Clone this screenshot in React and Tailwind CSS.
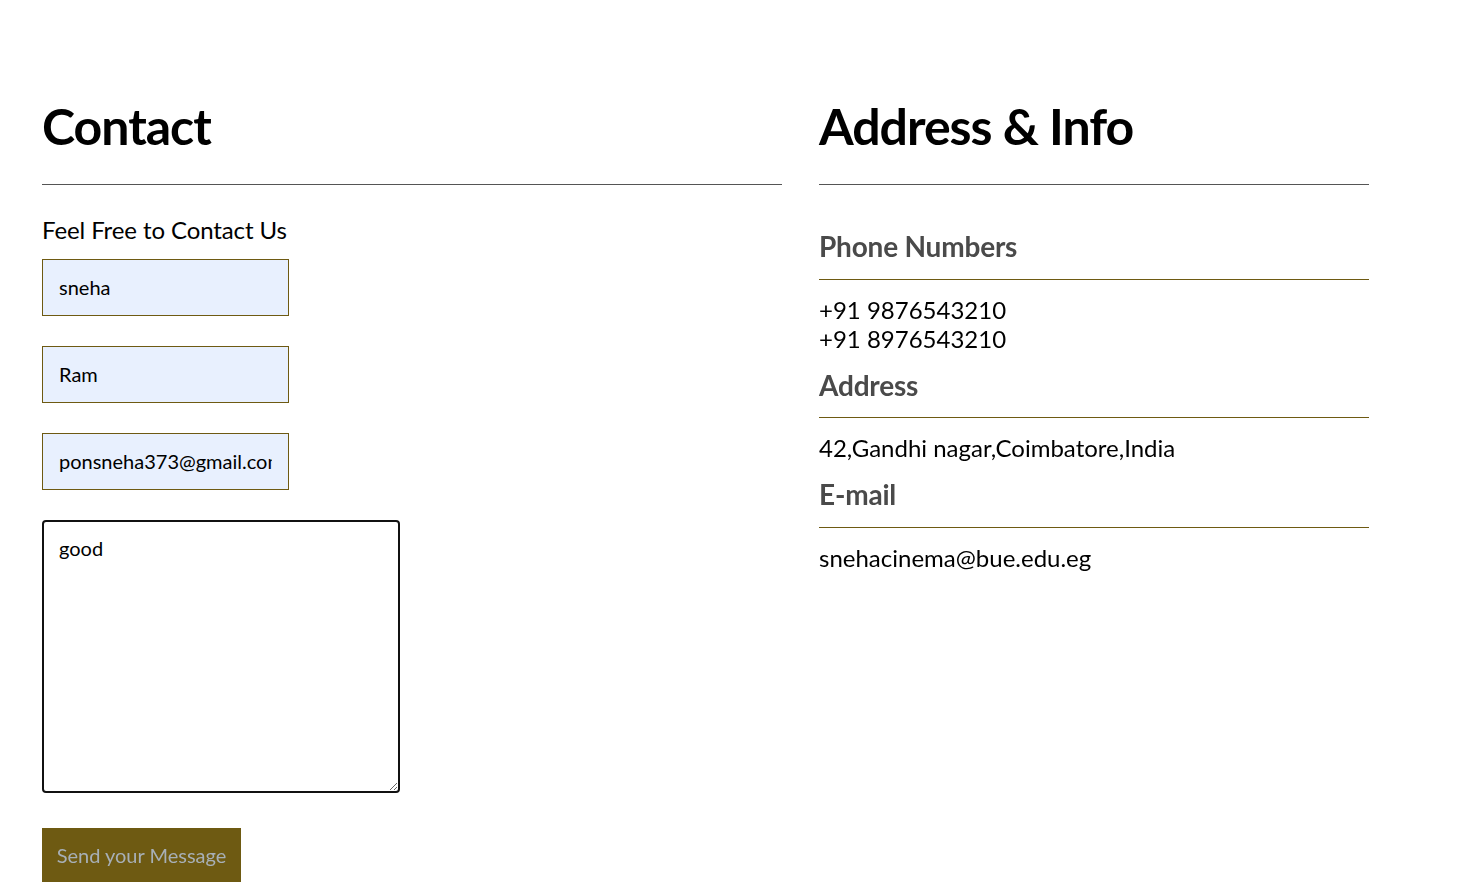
import React from 'react';

const InfoBlock = ({ title, children }) => (
  <div className="mt-[16px] first:mt-[15px]">
    <h3 className="text-[28px] font-bold leading-[1.2] tracking-[-0.2px] text-[#4a4a4a]">{title}</h3>
    <hr className="mt-[15px] border-0 border-t border-[#6e5a12]" />
    <div className="mt-[15px] text-[24px] leading-[29px] text-black">{children}</div>
  </div>
);

export default function App() {
  return (
    <div className="min-h-screen bg-white font-['Lato','Liberation_Sans',sans-serif] text-black">
      <div className="flex gap-[37px] pl-[42px] pt-[96px]">
        {/* Contact form */}
        <div className="w-[740px]">
          <h1 className="text-[50px] font-bold leading-[1.2] tracking-[-1px]">Contact</h1>
          <hr className="mt-[28px] border-0 border-t border-[#555]" />
          <p className="mt-[31px] text-[24px] leading-[1.2] tracking-[-0.1px]">Feel Free to Contact Us</p>
          <form className="mt-[14px] flex flex-col gap-[30px]" onSubmit={(e) => e.preventDefault()}>
            <input
              type="text"
              defaultValue="sneha"
              className="h-[57px] w-[247px] border border-[#6e5a12] bg-[#e8f0fe] px-4 text-[20px] text-black outline-none"
            />
            <input
              type="text"
              defaultValue="Ram"
              className="h-[57px] w-[247px] border border-[#6e5a12] bg-[#e8f0fe] px-4 text-[20px] text-black outline-none"
            />
            <input
              type="email"
              defaultValue="ponsneha373@gmail.com"
              className="h-[57px] w-[247px] border border-[#6e5a12] bg-[#e8f0fe] px-4 text-[20px] text-black outline-none"
            />
            <textarea
              defaultValue="good"
              autoFocus
              className="h-[273px] w-[358px] rounded-[4px] border-2 border-[#111] px-[15px] pt-[14px] text-[20px] leading-[1.2] text-black caret-black outline-none"
            />
            <button
              type="submit"
              className="mt-[5px] h-[54px] w-[199px] bg-[#6e5a12] text-[20px] text-[#a7afb6]"
            >
              Send your Message
            </button>
          </form>
        </div>

        {/* Address & info */}
        <div className="w-[550px]">
          <h1 className="text-[50px] font-bold leading-[1.2] tracking-[-1px]">Address &amp; Info</h1>
          <hr className="mt-[28px] border-0 border-t border-[#555]" />
          <div className="pt-[30px]">
            <InfoBlock title="Phone Numbers">
              <p>+91 9876543210</p>
              <p>+91 8976543210</p>
            </InfoBlock>
            <InfoBlock title="Address">
              <p>42,Gandhi nagar,Coimbatore,India</p>
            </InfoBlock>
            <InfoBlock title="E-mail">
              <p>snehacinema@bue.edu.eg</p>
            </InfoBlock>
          </div>
        </div>
      </div>
    </div>
  );
}
